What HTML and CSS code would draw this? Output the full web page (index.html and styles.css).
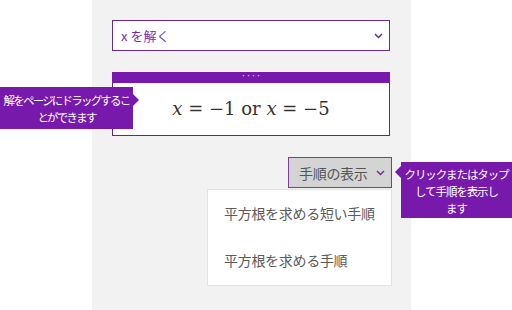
FILE: index.html
```html
<!DOCTYPE html>
<html lang="ja">
<head>
  <meta charset="UTF-8" />
  <title>解を求める</title>
  <link rel="stylesheet" href="styles.css">
</head>
<body>
  <div class="panel">
    <div class="solve-select">
      <span>x を解く</span>
      <svg class="chev" width="9" height="6" viewBox="0 0 9 6"><path d="M1 1 L4.5 4.5 L8 1" fill="none" stroke="#6b2a8e" stroke-width="1.4"/></svg>
    </div>

    <div class="card">
      <div class="handle">····</div>
      <div class="answer">
        <i>x</i>&nbsp;=&nbsp;−1&nbsp;or&nbsp;<i>x</i>&nbsp;=&nbsp;−5
      </div>
    </div>

    <div class="steps-row">
      <div class="steps-btn">
        <span>手順の表示</span>
        <svg class="chev" width="9" height="6" viewBox="0 0 9 6"><path d="M1 1 L4.5 4.5 L8 1" fill="none" stroke="#6b2a8e" stroke-width="1.4"/></svg>
      </div>
    </div>
  </div>

  <div class="menu">
    <div class="menu-item">平方根を求める短い手順</div>
    <div class="menu-item">平方根を求める手順</div>
  </div>

  <div class="tip tip-left">解をページにドラッグするこ<br>とができます</div>
  <div class="tip tip-right">クリックまたはタップ<br>して手順を表示し<br>ます</div>
</body>
</html>
```

FILE: styles.css
```css
body { margin: 0; background: #fff; font-family: "Noto Sans CJK JP", "Noto Sans", sans-serif; }
.panel { margin-left: 92px; width: 319px; height: 310px; box-sizing: border-box; padding: 20px 21px 0 20px; background: #f2f2f2; }

.solve-select { display: flex; align-items: center; justify-content: space-between; height: 31px; box-sizing: border-box; padding: 0 6px 0 8px; background: #fff; border: 1px solid #6b2a8e; color: #7a2ea6; font-size: 13px; }
.chev { display: block; }

.card { margin-top: 21px; }
.handle { height: 11px; background: #7719aa; color: #e8d6f2; font-size: 9px; line-height: 8px; text-align: center; }
.answer { height: 53px; box-sizing: border-box; border: 1px solid #6b1e9a; border-top: none; background: #fff; display: flex; align-items: center; justify-content: center; font-family: "DejaVu Serif", "Liberation Serif", serif; font-size: 18px; color: #333; padding-bottom: 1px; }
.answer i { font-style: italic; }

.steps-row { display: flex; justify-content: flex-end; margin-top: 21px; margin-right: -2px; }
.steps-btn { display: flex; align-items: center; justify-content: space-between; width: 104px; height: 31px; box-sizing: border-box; padding: 0 6px 0 10px; background: #d4d4d4; border: 1px solid #7a3a9e; color: #555; font-size: 14px; letter-spacing: -0.3px; }

.menu { position: absolute; left: 207px; top: 189px; width: 185px; height: 97px; box-sizing: border-box; background: #fff; border: 1px solid #e2e2e2; padding-top: 11px; }
.menu-item { padding-left: 16px; height: 47px; font-size: 14px; color: #5a5a5a; line-height: 24px; letter-spacing: -0.3px; }

.tip { position: absolute; background: #7719aa; color: #fff; font-size: 11.5px; line-height: 17px; text-align: center; white-space: nowrap; box-sizing: border-box; }
.tip::after { content: ""; position: absolute; width: 0; height: 0; border-top: 6px solid transparent; border-bottom: 6px solid transparent; }
.tip-left { left: 0; top: 87px; width: 133px; height: 42px; padding-top: 5px; letter-spacing: -1.8px; }
.tip-left::after { right: -6px; top: 7px; border-left: 6px solid #7719aa; }
.tip-right { left: 401px; top: 162px; width: 111px; height: 56px; padding-top: 4px; letter-spacing: -1.1px; }
.tip-right::after { left: -6px; top: 4px; border-right: 6px solid #7719aa; }
```
